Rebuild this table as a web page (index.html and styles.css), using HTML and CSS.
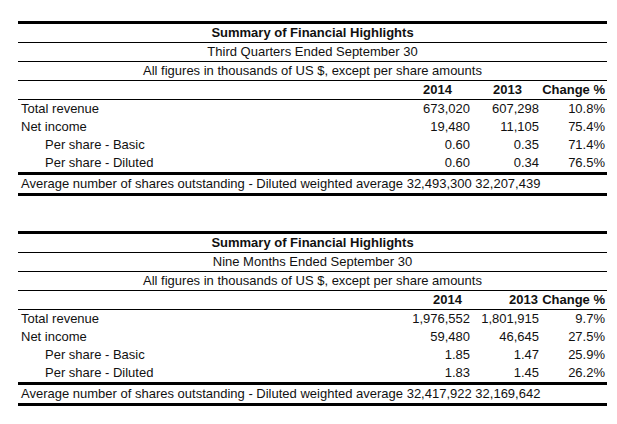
FILE: index.html
```html
<!DOCTYPE html>
<html>
<head>
<meta charset="utf-8">
<link rel="stylesheet" href="styles.css">
</head>
<body>
<section class="fin">
  <div class="row title">Summary of Financial Highlights</div>
  <div class="row sub">Third Quarters Ended September 30</div>
  <div class="row sub">All figures in thousands of US $, except per share amounts</div>
  <div class="row cols head q3">
    <span></span><span class="c1">2014</span><span class="c2">2013</span><span class="c3">Change %</span>
  </div>
  <div class="data">
    <div class="row cols"><span class="lbl">Total revenue</span><span>673,020</span><span>607,298</span><span class="c3">10.8%</span></div>
    <div class="row cols"><span class="lbl">Net income</span><span>19,480</span><span>11,105</span><span class="c3">75.4%</span></div>
    <div class="row cols"><span class="lbl ind">Per share - Basic</span><span>0.60</span><span>0.35</span><span class="c3">71.4%</span></div>
    <div class="row cols"><span class="lbl ind">Per share - Diluted</span><span>0.60</span><span>0.34</span><span class="c3">76.5%</span></div>
  </div>
  <div class="row avg">Average number of shares outstanding - Diluted weighted average 32,493,300 32,207,439</div>
</section>

<section class="fin second">
  <div class="row title">Summary of Financial Highlights</div>
  <div class="row sub">Nine Months Ended September 30</div>
  <div class="row sub">All figures in thousands of US $, except per share amounts</div>
  <div class="row cols head nm">
    <span></span><span class="c1">2014</span><span class="c2">2013</span><span class="c3">Change %</span>
  </div>
  <div class="data">
    <div class="row cols"><span class="lbl">Total revenue</span><span>1,976,552</span><span>1,801,915</span><span class="c3">9.7%</span></div>
    <div class="row cols"><span class="lbl">Net income</span><span>59,480</span><span>46,645</span><span class="c3">27.5%</span></div>
    <div class="row cols"><span class="lbl ind">Per share - Basic</span><span>1.85</span><span>1.47</span><span class="c3">25.9%</span></div>
    <div class="row cols"><span class="lbl ind">Per share - Diluted</span><span>1.83</span><span>1.45</span><span class="c3">26.2%</span></div>
  </div>
  <div class="row avg">Average number of shares outstanding - Diluted weighted average 32,417,922 32,169,642</div>
</section>
</body>
</html>
```

FILE: styles.css
```css
html, body {
  margin: 0;
  padding: 0;
  background: #fff;
}
body {
  padding-top: 21px;
  font-family: "Liberation Sans", Arial, Helvetica, sans-serif;
  font-size: 13px;
  color: #111;
}
.fin {
  width: 589px;
  margin-left: 18px;
  border-top: 3px solid #000;
  border-bottom: 3px solid #000;
}
.fin.second {
  margin-top: 35px;
}
.row {
  height: 18px;
  line-height: 18px;
  white-space: nowrap;
}
.title {
  text-align: center;
  font-weight: bold;
  border-bottom: 1px solid #000;
}
.sub {
  text-align: center;
  border-bottom: 1px solid #000;
}
.cols {
  display: grid;
  grid-template-columns: 382px 70px 69px 68px;
}
.cols > span {
  text-align: right;
}
.cols > span.lbl {
  text-align: left;
  padding-left: 3px;
}
.cols > span.lbl.ind {
  padding-left: 27px;
}
.cols > span.c3 {
  padding-right: 2px;
}
.head {
  font-weight: bold;
  border-bottom: 1px solid #000;
}
.head.q3 .c1 { padding-right: 18px; }
.head.q3 .c2 { padding-right: 17px; }
.head.nm .c1 { padding-right: 8px; }
.head.nm .c2 { padding-right: 1px; }
.data {
  border-bottom: 3px solid #000;
}
.avg {
  padding-left: 3px;
}
```
